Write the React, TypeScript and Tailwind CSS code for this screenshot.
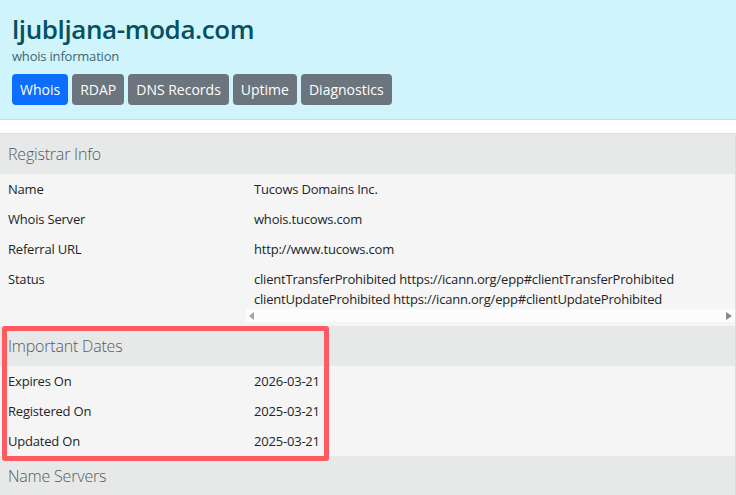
import type { ReactNode } from "react";

const font = { fontFamily: '"Open Sans", "Noto Sans", sans-serif' };

const tabs = ["Whois", "RDAP", "DNS Records", "Uptime", "Diagnostics"];

function SectionHeader({ children }: { children: ReactNode }) {
    return (
        <div className="h-10 flex items-center px-2 bg-[#e7e8e8] text-[16px] tracking-[-0.2px] font-light text-[#555b5e]">
            {children}
        </div>
    );
}

function Row({ label, children }: { label: string; children: ReactNode }) {
    return (
        <div className="flex bg-[#f5f5f5] text-[13px] tracking-[-0.2px] leading-5 text-[#212529]">
            <div className="w-[246px] shrink-0 px-2 py-[5px]">{label}</div>
            <div className="flex-1 px-2 py-[5px] whitespace-nowrap">{children}</div>
        </div>
    );
}

export default function App() {
    return (
        <div className="w-[736px] h-[495px] overflow-hidden bg-white" style={font}>
            <header className="bg-[#cff4fc] border-b border-[#a6e9f7] px-3 pt-3 pb-[14px]">
                <h1 className="text-[26px] tracking-[-0.4px] leading-[34px] font-semibold text-[#055160]">
                    ljubljana-moda.com
                </h1>
                <p className="text-[13px] tracking-[-0.2px] leading-5 text-[#43666e]">whois information</p>
                <div className="mt-2 flex gap-1">
                    {tabs.map((t, i) => (
                        <button
                            key={t}
                            className={
                                "h-[31px] px-2 rounded text-[14px] text-white " +
                                (i === 0 ? "bg-[#0d6efd]" : "bg-[#6c757d]")
                            }
                        >
                            {t}
                        </button>
                    ))}
                </div>
            </header>

            <div className="mt-[13px] border-t border-r border-[#dcdede]">
                <SectionHeader>Registrar Info</SectionHeader>
                <Row label="Name">Tucows Domains Inc.</Row>
                <Row label="Whois Server">whois.tucows.com</Row>
                <Row label="Referral URL">http://www.tucows.com</Row>
                <div className="flex bg-[#f5f5f5] text-[13px] tracking-[-0.2px] leading-5 text-[#212529] pb-1">
                    <div className="w-[246px] shrink-0 px-2 pt-[5px]">Status</div>
                    <div className="flex-1 min-w-0">
                        <div className="px-2 pt-[5px] whitespace-nowrap">
                            <div>clientTransferProhibited https://icann.org/epp#clientTransferProhibited</div>
                            <div>clientUpdateProhibited https://icann.org/epp#clientUpdateProhibited</div>
                        </div>
                        <div className="h-[13px] bg-[#fcfcfc] flex items-center justify-between px-[3px]">
                            <svg width="6" height="8" viewBox="0 0 6 8">
                                <path d="M5 0 L0 4 L5 8 Z" fill="#a3a3a3" />
                            </svg>
                            <svg width="6" height="8" viewBox="0 0 6 8">
                                <path d="M0 0 L6 4 L0 8 Z" fill="#8a8a8a" />
                            </svg>
                        </div>
                    </div>
                </div>

                <div className="relative">
                    <SectionHeader>Important Dates</SectionHeader>
                    <Row label="Expires On">2026-03-21</Row>
                    <Row label="Registered On">2025-03-21</Row>
                    <Row label="Updated On">2025-03-21</Row>
                    <div className="absolute left-[2px] top-0 w-[327px] h-[135px] border-[5px] border-[#ff5a5f] rounded-[3px] pointer-events-none" />
                </div>

                <SectionHeader>Name Servers</SectionHeader>
            </div>
        </div>
    );
}
